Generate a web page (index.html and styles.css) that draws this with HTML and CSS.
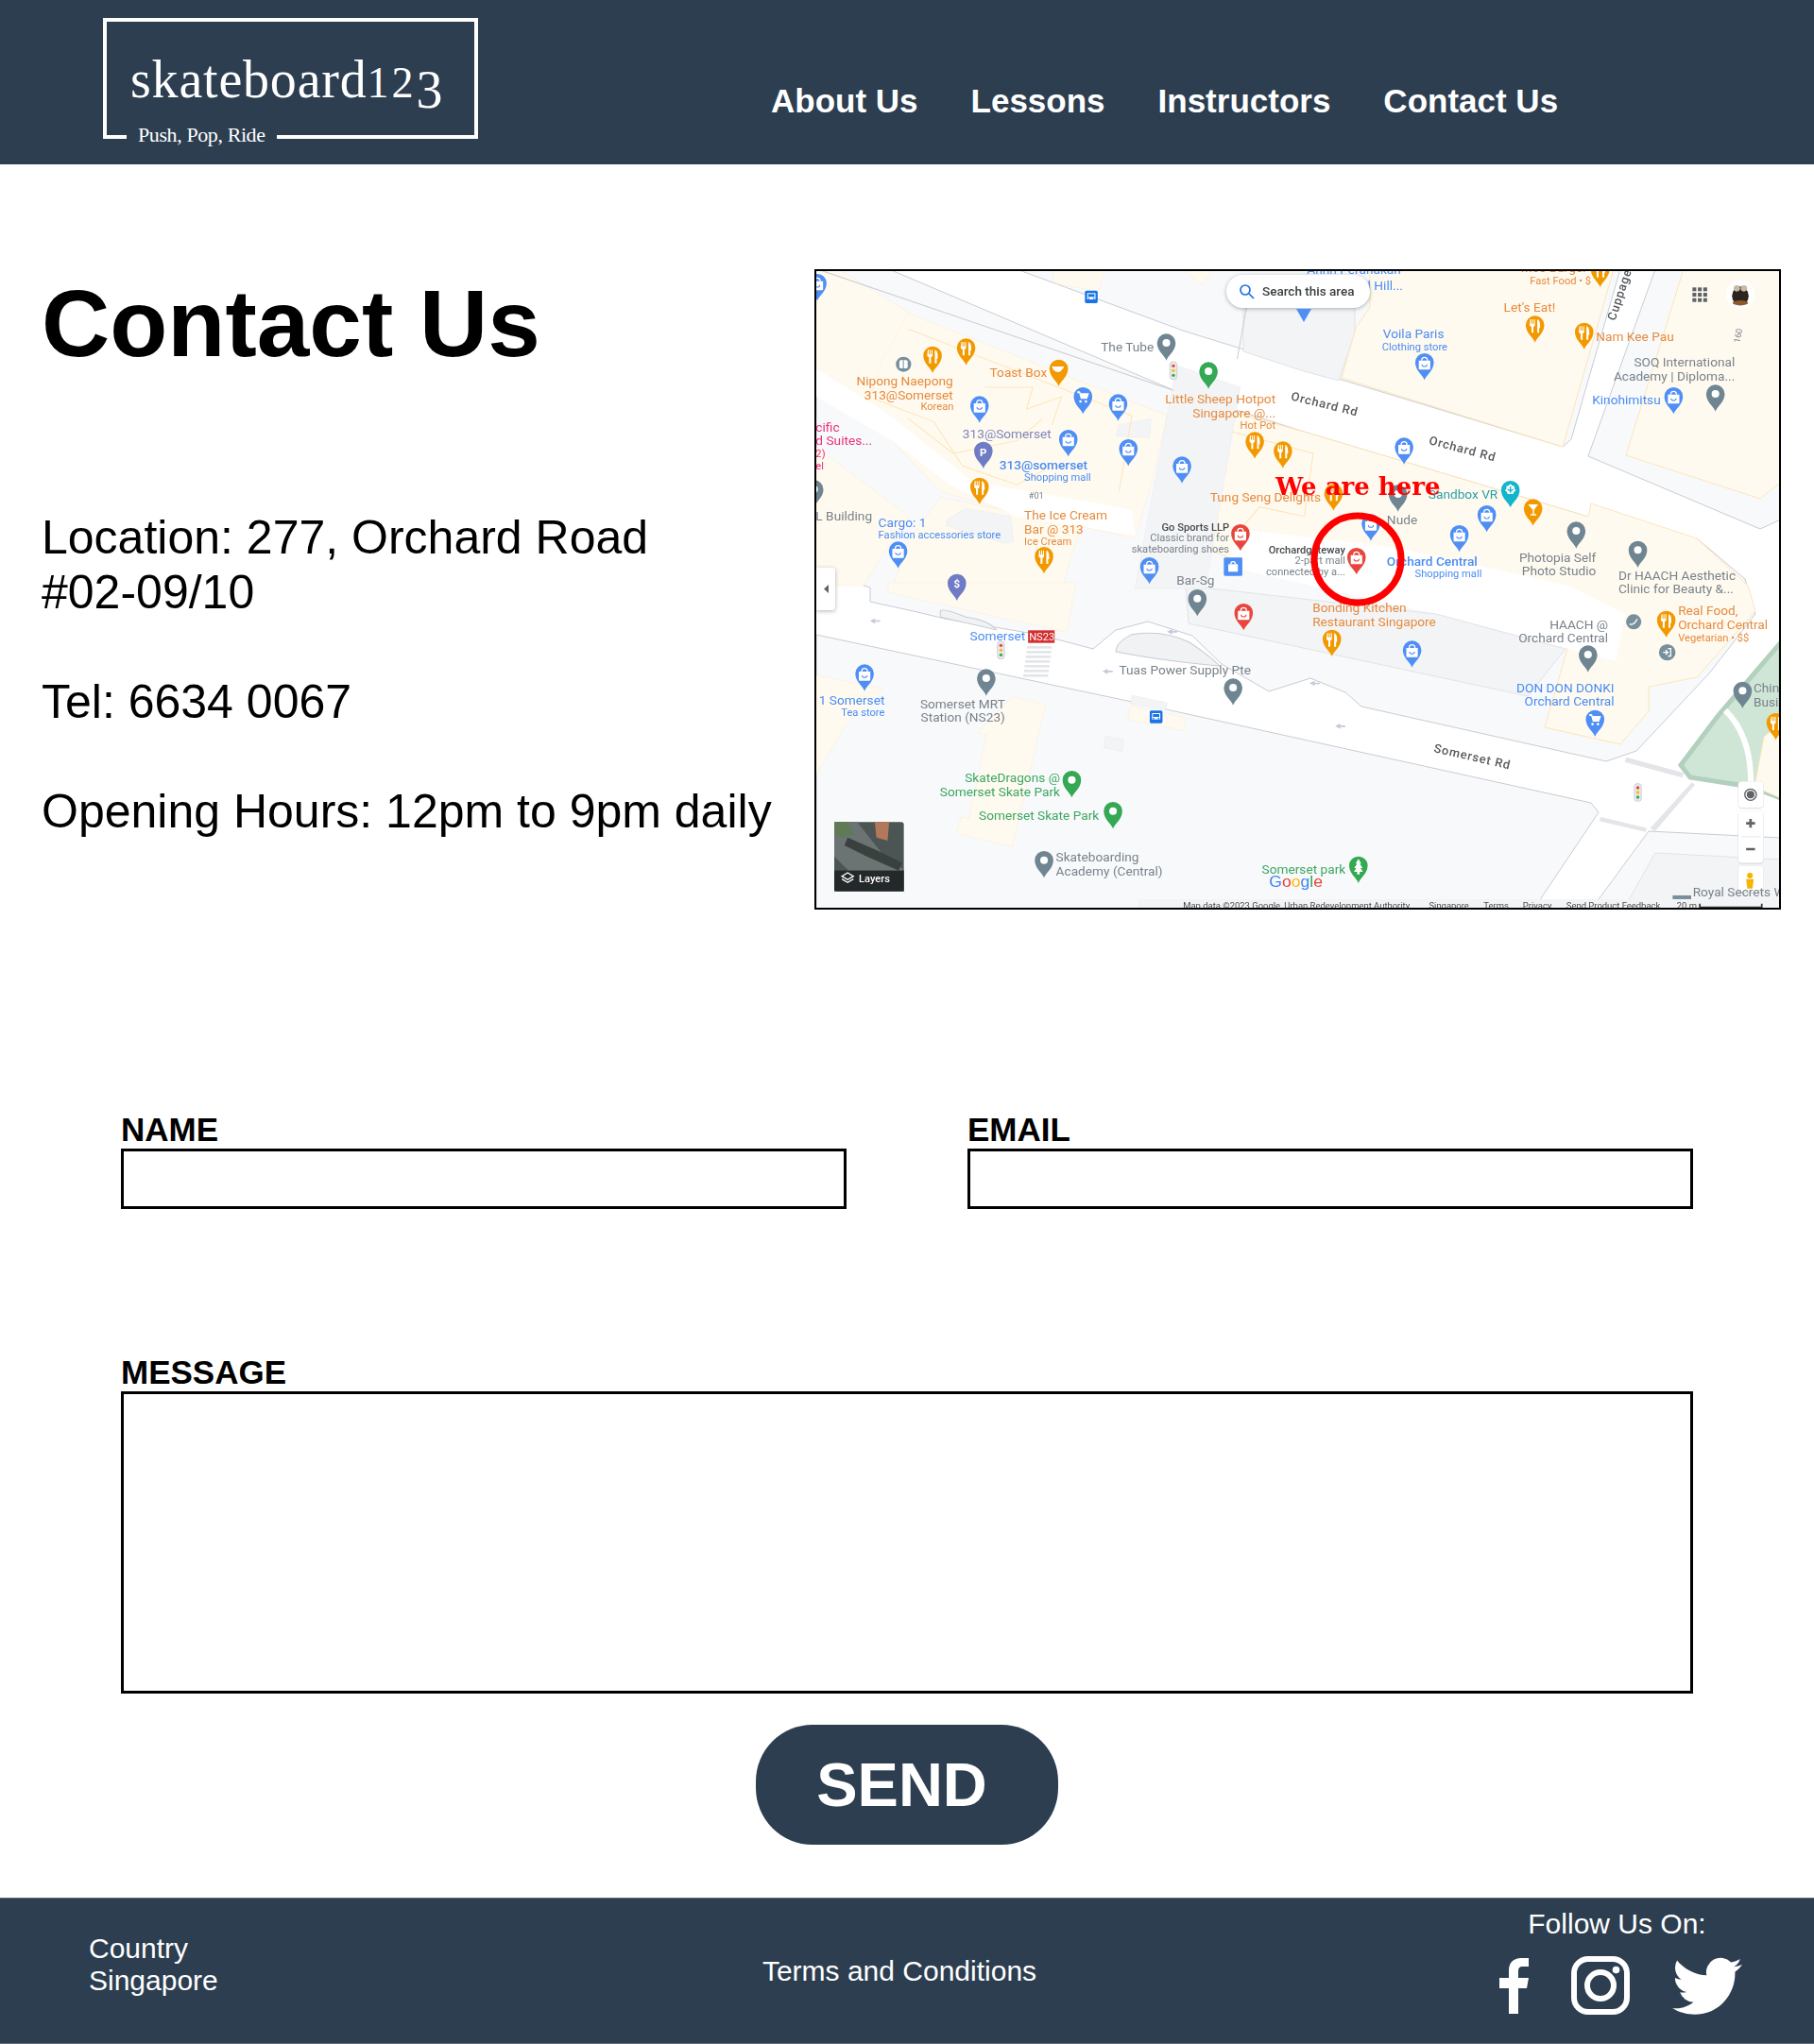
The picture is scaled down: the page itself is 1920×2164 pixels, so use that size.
FILE: index.html
```html
<!DOCTYPE html>
<html lang="en">
<head>
    <meta charset="UTF-8">
    <meta name="viewport" content="width=device-width, initial-scale=1.0">
    <title>Contact Us</title>
    <link rel="stylesheet" href="styles.css">
</head>
<body>
    <header class="site-header">
        <a class="logo" href="#">
            <span class="logo-name">skateboard<span class="logo-one">1</span><span class="logo-two">2</span><span class="logo-three">3</span></span>
            <span class="logo-tag">Push, Pop, Ride</span>
        </a>
        <nav class="main-nav">
            <a href="#">About Us</a>
            <a href="#">Lessons</a>
            <a href="#">Instructors</a>
            <a href="#">Contact Us</a>
        </nav>
    </header>

    <main>
        <section class="contact-top">
            <div class="contact-info">
                <h1>Contact Us</h1>
                <p>Location: 277, Orchard Road<br>#02-09/10<br><br>Tel: 6634 0067<br><br>Opening Hours: 12pm to 9pm daily</p>
            </div>

            <div class="map-box">
                <svg class="map" viewBox="864 287 1019 674" role="img" aria-label="Map of Orchard Road">
                    <defs>
                        <path id="pin" d="M0 0C-6-17-29-30-29-56A29 29 0 1 1 29-56C29-30 6-17 0 0Z"/>
                        <g id="pin-dot"><use href="#pin" class="pin-fill"/><circle cx="0" cy="-56" r="12" class="w"/></g>
                        <g id="pin-food"><use href="#pin" class="pin-fill"/><path class="w" d="M-15-74h3v14h3v-14h3v14h3v-14h3v18q0 5-5 6v19h-6v-19q-6-1-6-6zM7-74q9 2 9 20v8h-3v15h-6z"/></g>
                        <g id="pin-bag"><use href="#pin" class="pin-fill"/><path class="w" d="M-18-62h36v26q0 3-3 3h-30q-3 0-3-3z"/><path class="line-w" d="M-9-62a9 10 0 0 1 18 0"/><path class="line-c" d="M-8-50a8 7 0 0 0 16 0"/></g>
                        <g id="pin-cart"><use href="#pin" class="pin-fill"/><path class="w" d="M-18-72h8l3 6h26l-6 18h-20l-5-18h-6zM-8-44a4 4 0 1 0 .1 0zM9-44a4 4 0 1 0 .1 0z"/></g>
                        <g id="bus"><rect x="-20" y="-20" width="40" height="40" rx="5" class="bus-bg"/><path class="w" d="M-13-12h26v20h-26z"/><rect x="-10" y="-9" width="20" height="9" class="bus-bg"/><circle cx="-8" cy="5" r="2.5" class="bus-bg"/><circle cx="8" cy="5" r="2.5" class="bus-bg"/></g>
                        <g id="light"><rect x="-11" y="-28" width="22" height="56" rx="9" class="light-bg"/><circle cy="-15" r="5" class="l-r"/><circle cy="0" r="5" class="l-y"/><circle cy="15" r="5" class="l-g"/></g>
                    </defs>

                    <!-- ground: page coordinates -->
                    <rect x="864" y="287" width="1019" height="674" class="road"/>
                    <polygon class="pave" points="864,285 941,285 1242,413 1380,457 1681,547 1796,570 1847,613 1858,650 1809,713 1732,795 1700,806 1441,748 1424,733 1387,718 1343,732 1293,703 1262,673 1215,658 1181,667 1157,687 1100,672 1000,655 971,648 921,637 921,622 864,605"/>
                    <polygon class="pave" points="1076,285 1252,350 1420,402 1654,473 1663,465 1715,285"/>
                    <polygon class="pave" points="1681,483 1752,285 1885,285 1885,550 1863,560"/>
                    <polygon class="pave" points="864,672 1198,743 1380,783 1684,850 1692,860 1623,963 864,963"/>
                    <polygon class="pave" points="1684,963 1745,880 1885,887 1885,963"/>
                    <polygon class="bldg" points="1718,963 1752,903 1885,910 1885,963"/>
                    <polygon class="bldg" points="1316,325 1434,325 1434,353 1417,403 1380,393 1316,372"/>
                    <polygon class="cream" points="1420,400 1654,473 1708,285 1450,285 1450,325 1435,347"/>
                    <polygon class="cream" points="1721,482 1782,285 1885,285 1885,510 1863,528"/>
                    <polygon class="cream" points="1245,420 1380,457 1681,547 1684,533 1796,570 1850,620 1858,647 1796,717 1745,727 1745,753 1715,788 1635,770 1659,687 1640,670 1500,640 1300,590 1230,560"/>
                    <polygon class="road-in" points="1310,560 1480,580 1660,620 1720,650 1710,700 1520,650 1300,600"/>
                    <polygon class="bldg" points="1255,620 1520,650 1657,687 1617,737 1258,660"/>
                    <polygon class="park" points="1779,810 1819,757 1885,680 1885,845 1853,833 1789,823"/>
                    <path class="park-path" d="M1826 752Q1855 780 1853 835"/>
                    <polygon class="cream" points="1857,833 1867,780 1885,765 1885,845"/>

                    <!-- west half, north: zoomed grid -->
                    <g transform="translate(860 280) scale(.338 .3333)">
                        <polygon class="cream" points="12,20 90,20 305,155 235,300 240,480 12,330"/>
                        <polygon class="cream" points="300,155 1110,480 1060,700 1010,870 830,830 600,780 400,720 250,560 160,490 220,300"/>
                        <polygon class="cream" points="12,580 300,800 200,950 160,1020 12,1020"/>
                        <polygon class="cream" points="400,740 840,830 780,1030 250,1030 300,880"/>
                        <polygon class="cream" points="750,20 760,60 895,85 915,20"/>
                        <polygon class="cream" points="1165,20 1220,65 1250,20"/>
                        <polygon class="road-in" points="12,330 230,470 500,690 900,760 1000,780 1010,860 640,800 430,700 250,560 12,420"/>
                        <polygon class="bldg" points="1140,320 1340,390 1230,1030 1010,1030"/>
                        <polygon class="bldg" points="420,810 480,775 620,800 630,880 600,885 420,830"/>
                        <polygon class="bldg" points="960,510 1060,490 1055,550 950,545"/>
                        <polyline class="cell" points="300,205 1000,480 960,720"/>
                        <polyline class="cell" points="200,430 380,500 470,640 640,700 730,650"/>
                        <polyline class="cell" points="540,390 690,390 670,460 780,420 750,510"/>
                        <polyline class="cell" points="300,490 440,600 640,560 720,490"/>
                        <polyline class="cell" points="1310,530 1568,600 1540,800 1400,770 1350,830"/>
                        <polyline class="edge" points="30,20 1130,400"/>
                        <polyline class="edge" points="1330,300 1360,130"/>

                        <use href="#pin-bag" class="c-blue" transform="translate(15 115)"/>
                        <use href="#bus" transform="translate(873 103)"/>
                        <use href="#pin-dot" class="c-grey" transform="translate(1108 305)"/>
                        <use href="#light" transform="translate(1130 337)"/>
                        <use href="#pin-dot" class="c-green" transform="translate(1240 395)"/>
                        <use href="#pin-food" class="c-food" transform="translate(376 345)"/>
                        <use href="#pin-food" class="c-food" transform="translate(481 320)"/>
                        <use href="#pin-food" class="c-food" transform="translate(1385 617)"/>
                        <use href="#pin-food" class="c-food" transform="translate(1473 647)"/>
                        <use href="#pin-food" class="c-food" transform="translate(523 762)"/>
                        <use href="#pin-food" class="c-food" transform="translate(725 982)"/>
                        <use href="#pin" class="c-food pin-fill" transform="translate(771 387)"/>
                        <path class="w" d="M749 324h38q-1 8-6 10q-2 7-13 8q-11-1-14-8z"/>
                        <circle cx="285" cy="317" r="24" class="grey-fill"/><rect x="272" y="304" width="26" height="26" rx="5" class="w"/><rect x="283" y="304" width="3" height="26" class="grey-fill"/>
                        <use href="#pin-bag" class="c-blue" transform="translate(523 503)"/>
                        <use href="#pin-bag" class="c-blue" transform="translate(957 497)"/>
                        <use href="#pin-bag" class="c-blue" transform="translate(801 610)"/>
                        <use href="#pin-bag" class="c-blue" transform="translate(989 640)"/>
                        <use href="#pin-bag" class="c-blue" transform="translate(1157 695)"/>
                        <use href="#pin-bag" class="c-blue" transform="translate(268 965)"/>
                        <use href="#pin-bag" class="c-blue" transform="translate(1055 1015)"/>
                        <use href="#pin-cart" class="c-blue" transform="translate(847 475)"/>
                        <use href="#pin" class="c-purple pin-fill" transform="translate(535 648)"/>
                        <text x="535" y="608" class="mt-pin">P</text>
                        <use href="#pin-dot" class="c-grey" transform="translate(5 770)"/>
                        <use href="#pin-bag" class="c-red" transform="translate(1340 910)"/>
                        <rect x="1288" y="931" width="58" height="58" rx="4" class="blue-fill"/>
                        <path class="w" d="M1302 952h30v24h-30z"/><path class="line-w" d="M1310 952a7 8 0 0 1 14 0"/>

                        <text x="903" y="277" class="t mg">The Tube</text>
                        <text x="1450" y="442" class="t mo e">Little Sheep Hotpot</text>
                        <text x="1450" y="487" class="t mo e">Singapore @...</text>
                        <text x="1450" y="522" class="t s mo e">Hot Pot</text>
                        <text x="555" y="358" class="t mo">Toast Box</text>
                        <text x="440" y="385" class="t mo e">Nipong Naepong</text>
                        <text x="440" y="428" class="t mo e">313@Somerset</text>
                        <text x="442" y="462" class="t s mo e">Korean</text>
                        <text x="470" y="552" class="t mv">313@Somerset</text>
                        <text x="585" y="650" class="t mb med">313@somerset</text>
                        <text x="663" y="687" class="t s mb">Shopping mall</text>
                        <text x="677" y="743" class="t xs mg">#01</text>
                        <text x="10" y="530" class="t mp">cific</text>
                        <text x="10" y="573" class="t mp">d Suites...</text>
                        <text x="10" y="612" class="t s mp">2)</text>
                        <text x="10" y="652" class="t s mp">el</text>
                        <text x="10" y="812" class="t mg">L Building</text>
                        <text x="206" y="835" class="t mb">Cargo: 1</text>
                        <text x="206" y="870" class="t s mb">Fashion accessories store</text>
                        <text x="663" y="811" class="t mo">The Ice Cream</text>
                        <text x="663" y="855" class="t mo">Bar @ 313</text>
                        <text x="663" y="892" class="t s mo">Ice Cream</text>
                        <text x="1245" y="753" class="t mo">Tung Seng Delights</text>
                        <text x="1305" y="845" class="t s mk med e">Go Sports LLP</text>
                        <text x="1305" y="880" class="t s mg e">Classic brand for</text>
                        <text x="1305" y="915" class="t s mg e">skateboarding shoes</text>
                        <text x="1140" y="1018" class="t mg">Bar-Sg</text>
                    </g>

                    <!-- east half, north -->
                    <g transform="translate(1380 280) scale(.338 .3333)">
                        <text x="10" y="30" class="t mb">Anhn Peranakan</text>
                        <text x="200" y="80" class="t mb">l Hill...</text>
                        <text x="680" y="25" class="t mo">Mee Burger</text>
                        <text x="708" y="62" class="t s mo">Fast Food • $</text>
                        <use href="#pin-food" class="c-food" transform="translate(928 72)"/>
                        <text x="626" y="150" class="t mo">Let's Eat!</text>
                        <use href="#pin-food" class="c-food" transform="translate(724 248)"/>
                        <use href="#pin-food" class="c-food" transform="translate(878 270)"/>
                        <text x="915" y="243" class="t mo">Nam Kee Pau</text>
                        <text transform="translate(975 180) rotate(-72)" class="t rd">Cuppage</text>
                        <text transform="translate(1365 250) rotate(-80)" class="t xs mg">160</text>
                        <text x="1350" y="323" class="t mg e">SOQ International</text>
                        <text x="1350" y="368" class="t mg e">Academy | Diploma...</text>
                        <text x="903" y="445" class="t mb">Kinohimitsu</text>
                        <use href="#pin-bag" class="c-blue" transform="translate(1158 475)"/>
                        <use href="#pin-dot" class="c-grey" transform="translate(1289 467)"/>
                        <text x="248" y="235" class="t mb">Voila Paris</text>
                        <text x="245" y="273" class="t s mb">Clothing store</text>
                        <use href="#pin-bag" class="c-blue" transform="translate(378 367)"/>
                        <text transform="translate(-42 430) rotate(14)" class="t rd">Orchard Rd</text>
                        <text transform="translate(390 570) rotate(15)" class="t rd">Orchard Rd</text>
                        <use href="#pin-bag" class="c-blue" transform="translate(314 635)"/>
                        <use href="#pin-food" class="c-food" transform="translate(93 782)"/>
                        <use href="#pin-dot" class="c-grey" transform="translate(295 785)"/>
                        <text x="260" y="825" class="t mg">Nude</text>
                        <use href="#pin-bag" class="c-blue" transform="translate(210 878)"/>
                        <use href="#pin-bag" class="c-red" transform="translate(165 985)"/>
                        <use href="#pin-bag" class="c-blue" transform="translate(487 913)"/>
                        <use href="#pin-bag" class="c-blue" transform="translate(573 850)"/>
                        <use href="#pin" class="c-teal pin-fill" transform="translate(647 772)"/>
                        <path class="w" d="M647 697l6 6 7 1-1 7 5 7-6 4-2 7h-18l-2-7-6-4 5-7-1-7 7-1z"/>
                        <path class="line-t" d="M647 705v20M638 714l9 6 9-6"/>
                        <text x="390" y="743" class="t mt">Sandbox VR</text>
                        <use href="#pin" class="c-food pin-fill" transform="translate(718 830)"/>
                        <path class="w" d="M702 762h32l-13 17v14h7v4h-18v-4h7v-14z"/>
                        <text x="130" y="918" class="t s mk med e">Orchardgateway</text>
                        <text x="130" y="952" class="t s mg e">2-part mall</text>
                        <text x="130" y="988" class="t s mg e">connected by a...</text>
                        <text x="260" y="957" class="t mb med">Orchard Central</text>
                        <text x="348" y="993" class="t s mb">Shopping mall</text>
                        <use href="#pin-dot" class="c-grey" transform="translate(853 902)"/>
                        <use href="#pin-dot" class="c-grey" transform="translate(1046 963)"/>
                        <text x="915" y="945" class="t mg e">Photopia Self</text>
                        <text x="915" y="988" class="t mg e">Photo Studio</text>
                        <text x="985" y="1003" class="t mg">Dr HAACH Aesthetic</text>
                        <!-- top right buttons -->
                        <g class="grey-dark">
                            <rect x="1217" y="73" width="12" height="12"/><rect x="1234" y="73" width="12" height="12"/><rect x="1251" y="73" width="12" height="12"/>
                            <rect x="1217" y="90" width="12" height="12"/><rect x="1234" y="90" width="12" height="12"/><rect x="1251" y="90" width="12" height="12"/>
                            <rect x="1217" y="107" width="12" height="12"/><rect x="1234" y="107" width="12" height="12"/><rect x="1251" y="107" width="12" height="12"/>
                        </g>
                        <circle cx="1367" cy="95" r="45" class="w"/>
                        <ellipse cx="1367" cy="100" rx="26" ry="30" class="panda"/>
                        <circle cx="1356" cy="76" r="10" class="panda-face"/><circle cx="1378" cy="76" r="10" class="panda-face"/>
                        <ellipse cx="1367" cy="122" rx="24" ry="8" class="panda-brown"/>
                    </g>

                    <!-- search pill -->
                    <rect x="1298" y="291" width="152" height="35" rx="17.5" class="pill"/>
                    <circle cx="1318" cy="307" r="5" class="line-blue"/><path class="line-blue" d="M1322 311l5 5"/>
                    <text x="1336" y="313" class="pill-text">Search this area</text>
                    <path class="blue-fill" d="M1372 327h16l-8 14z"/>

                    <!-- west half, south -->
                    <g transform="translate(860 620) scale(.338 .3333)">
                        <polygon class="cream" points="235,20 795,148 825,-10 240,-10"/>
                        <polygon class="cream" points="12,285 218,328 100,450 12,600"/>
                        <polygon class="cream" points="625,353 730,378 625,828 452,788 465,735 490,740 545,475 517,468"/>
                        <polygon class="bldg" points="918,478 975,490 970,527 912,515"/>
                        <polygon class="cream" points="995,382 1170,420 1163,460 987,425"/>
                        <polygon class="bldg" points="1000,348 1110,372 1105,395 997,375"/>
                        <path class="island" d="M400 80Q410 70 480 100Q550 110 575 140L400 100Z"/>
                        <path class="island" d="M950 210Q950 180 1000 155Q1100 140 1180 180Q1240 220 1275 255Q1100 240 950 210Z"/>
                        <g class="stripes">
                            <rect x="672" y="192" width="78" height="8"/><rect x="670" y="207" width="78" height="8"/><rect x="668" y="222" width="78" height="8"/><rect x="666" y="237" width="78" height="8"/>
                            <rect x="664" y="252" width="78" height="8"/><rect x="662" y="267" width="78" height="8"/><rect x="660" y="282" width="78" height="8"/>
                        </g>
                        <path class="arrow" d="M180 112l16-8v6h16v5h-16v6z"/>
                        <path class="arrow" d="M1110 146l16-8v6h16v5h-16v6z"/>
                        <path class="arrow" d="M908 272l16-8v6h16v5h-16v6z"/>

                        <use href="#pin" class="c-purple pin-fill" transform="translate(452 48)"/>
                        <text x="452" y="6" class="mt-pin">$</text>
                        <text x="493" y="175" class="t mb">Somerset</text>
                        <rect x="675" y="142" width="83" height="40" class="ns-bg"/>
                        <text x="678" y="174" class="t s ns">NS23</text>
                        <use href="#light" transform="translate(590 205)"/>
                        <use href="#pin-bag" class="c-blue" transform="translate(163 335)"/>
                        <text x="20" y="378" class="t mb">1 Somerset</text>
                        <text x="226" y="413" class="t s mb e">Tea store</text>
                        <use href="#pin-dot" class="c-grey" transform="translate(544 350)"/>
                        <text x="337" y="390" class="t mg">Somerset MRT</text>
                        <text x="339" y="432" class="t mg">Station (NS23)</text>
                        <text x="960" y="282" class="t mg">Tuas Power Supply Pte</text>
                        <use href="#pin-dot" class="c-grey" transform="translate(1317 380)"/>
                        <use href="#bus" transform="translate(1076 417)"/>
                        <use href="#pin-dot" class="c-grey" transform="translate(1205 97)"/>
                        <use href="#pin-bag" class="c-red" transform="translate(1350 142)"/>
                        <text x="775" y="625" class="t mn e">SkateDragons @</text>
                        <text x="775" y="668" class="t mn e">Somerset Skate Park</text>
                        <use href="#pin-dot" class="c-green" transform="translate(812 673)"/>
                        <text x="521" y="743" class="t mn">Somerset Skate Park</text>
                        <use href="#pin-dot" class="c-green" transform="translate(941 772)"/>
                        <use href="#pin-dot" class="c-grey" transform="translate(725 928)"/>
                        <text x="762" y="875" class="t mg">Skateboarding</text>
                        <text x="762" y="920" class="t mg">Academy (Central)</text>
                        <text x="1407" y="915" class="t mn">Somerset park</text>
                        <text x="1430" y="958" class="t google"><tspan class="g-b">G</tspan><tspan class="g-r">o</tspan><tspan class="g-y">o</tspan><tspan class="g-b">g</tspan><tspan class="g-g">l</tspan><tspan class="g-r">e</tspan></text>

                        <!-- layers tile -->
                        <rect x="65" y="748" width="224" height="226" rx="10" class="w"/>
                        <rect x="68" y="751" width="218" height="220" rx="8" class="sat"/>
                        <polygon class="sat-a" points="68,751 140,751 240,880 286,900 286,971 180,971 68,860"/>
                        <polygon class="sat-b" points="110,800 200,840 280,880 270,905 170,860 100,825"/>
                        <polygon class="sat-c" points="195,751 240,751 235,810 200,800"/>
                        <polygon class="sat-d" points="68,751 110,751 130,790 90,800 68,785"/>
                        <rect x="68" y="905" width="218" height="66" class="sat-shade"/>
                        <path class="line-w" d="M110 912l18 11-18 11-18-11zM92 932l18 11 18-11"/>
                        <text x="145" y="943" class="t s lay">Layers</text>
                    </g>

                    <!-- east half, south -->
                    <g transform="translate(1380 620) scale(.338 .3333)">
                        <text x="985" y="25" class="t mg">Clinic for Beauty &amp;...</text>
                        <text x="27" y="83" class="t mo">Bonding Kitchen</text>
                        <text x="27" y="128" class="t mo">Restaurant Singapore</text>
                        <use href="#pin-food" class="c-food" transform="translate(88 225)"/>
                        <use href="#pin-bag" class="c-blue" transform="translate(339 260)"/>
                        <text x="953" y="138" class="t mg e">HAACH @</text>
                        <text x="953" y="180" class="t mg e">Orchard Central</text>
                        <use href="#pin-dot" class="c-grey" transform="translate(890 275)"/>
                        <circle cx="1033" cy="115" r="24" class="grey-fill"/><path class="line-w" d="M1020 122q14 6 24-16"/>
                        <use href="#pin-food" class="c-food" transform="translate(1135 165)"/>
                        <text x="1172" y="92" class="t mo">Real Food,</text>
                        <text x="1172" y="137" class="t mo">Orchard Central</text>
                        <text x="1172" y="177" class="t s mo">Vegetarian • $$</text>
                        <circle cx="1138" cy="212" r="26" class="grey-fill"/><path class="line-w" d="M1125 212h14M1133 205l7 7-7 7M1140 200h9v24h-9"/>
                        <text x="972" y="338" class="t mb e">DON DON DONKI</text>
                        <text x="972" y="380" class="t mb e">Orchard Central</text>
                        <use href="#pin-cart" class="c-blue" transform="translate(912 480)"/>
                        <text transform="translate(405 528) rotate(13)" class="t rd">Somerset Rd</text>
                        <text x="1408" y="340" class="t mg">Chin</text>
                        <text x="1408" y="385" class="t mg">Busi</text>
                        <use href="#pin-dot" class="c-grey" transform="translate(1374 390)"/>
                        <use href="#pin-food" class="c-food" transform="translate(1478 490)"/>
                        <use href="#light" transform="translate(1046 657)"/>
                        <path class="arrow" d="M18 310l16-8v6h16v5h-16v6z"/>
                        <path class="arrow" d="M98 446l16-8v6h16v5h-16v6z"/>
                        <g class="stripes">
                            <polygon points="1010,545 1190,595 1185,610 1005,560"/>
                            <polygon points="930,735 1075,770 1070,782 925,748"/>
                            <polygon points="1085,770 1215,625 1225,632 1100,780"/>
                        </g>
                        <use href="#pin" class="c-green pin-fill" transform="translate(171 945)"/>
                        <path class="w" d="M171 868l9 15h-5l9 14h-6l7 12h-10v8h-8v-8h-10l7-12h-6l9-14h-5z"/>

                        <rect x="1360" y="622" width="80" height="84" rx="12" class="ctrl"/>
                        <circle cx="1399" cy="664" r="12" class="grey-dark"/><circle cx="1399" cy="664" r="18" class="ctrl-ring"/>
                        <rect x="1360" y="715" width="80" height="166" rx="12" class="ctrl"/>
                        <path class="ctrl-sign" d="M1385 751h28v8h-28zM1395 741h8v28h-8zM1385 833h28v8h-28z"/>
                        <rect x="1370" y="796" width="60" height="3" class="ctrl-sep"/>
                        <rect x="1360" y="890" width="80" height="84" rx="12" class="ctrl"/>
                        <circle cx="1397" cy="921" r="9" class="peg"/><path class="peg" d="M1385 932h24l-4 30h-16z"/>

                        <rect x="1155" y="984" width="58" height="13" class="grey-mid"/>
                        <text x="1218" y="988" class="t mg">Royal Secrets W</text>
                        <rect x="-520" y="996" width="2020" height="36" class="bar"/>
                        <text x="-378" y="1025" class="t tiny">Map data ©2023 Google, Urban Redevelopment Authority</text>
                        <text x="392" y="1025" class="t tiny">Singapore</text>
                        <text x="563" y="1025" class="t tiny">Terms</text>
                        <text x="686" y="1025" class="t tiny">Privacy</text>
                        <text x="822" y="1025" class="t tiny">Send Product Feedback</text>
                        <text x="1168" y="1025" class="t tiny">20 m</text>
                        <path class="scale" d="M1240 1010v12h194v-12"/>
                    </g>

                    <!-- back arrow tab -->
                    <path class="ctrl" d="M864 601h17a3 3 0 0 1 3 3v39a3 3 0 0 1-3 3h-17z"/>
                    <path class="grey-dark" d="M877 619v9l-5-4.500z"/>

                    <!-- the marker that was added on top of the map -->
                    <text x="1350" y="524" class="here">We are here</text>
                    <circle cx="1437" cy="592" r="46" class="here-ring"/>
                </svg>
            </div>
        </section>

        <form class="contact-form">
            <div class="form-row">
                <div class="field">
                    <label for="name">NAME</label>
                    <input type="text" id="name">
                </div>
                <div class="field">
                    <label for="email">EMAIL</label>
                    <input type="email" id="email">
                </div>
            </div>
            <div class="field">
                <label for="message">MESSAGE</label>
                <textarea id="message"></textarea>
            </div>
            <button type="button" class="send">SEND</button>
        </form>
    </main>

    <footer class="site-footer">
        <div class="country">Country<br>Singapore</div>
        <a class="terms" href="#">Terms and Conditions</a>
        <div class="follow">
            <span class="follow-title">Follow Us On:</span>
            <div class="socials">
                <svg width="31" height="59" viewBox="1587 2074 31 59"><path class="icon" d="M1607 2133V2106H1616L1618 2095H1607V2088C1607 2085 1608 2083 1612 2083H1618V2074C1616 2074 1613 2074 1610 2074C1602 2074 1597 2079 1597 2087V2095H1587V2106H1597V2133Z"/></svg>
                <svg width="62" height="62" viewBox="0 0 62 62"><rect class="icon-line" x="3" y="3" width="56" height="56" rx="15"/><circle class="icon-line" cx="31" cy="31" r="14"/><circle class="icon" cx="47.500" cy="14.500" r="3.800"/></svg>
                <svg width="74" height="61" viewBox="0 0 24 19.800"><path class="icon" d="M23.953 2.570a10 10 0 01-2.825.775 4.958 4.958 0 002.163-2.723c-.951.555-2.005.959-3.127 1.184a4.920 4.920 0 00-8.384 4.482C7.690 6.095 4.067 4.130 1.640 1.162a4.822 4.822 0 00-.666 2.475c0 1.710.870 3.213 2.188 4.096a4.904 4.904 0 01-2.228-.616v.060a4.923 4.923 0 003.946 4.827 4.996 4.996 0 01-2.212.085 4.936 4.936 0 004.604 3.417 9.867 9.867 0 01-6.102 2.105c-.390 0-.779-.023-1.170-.067a13.995 13.995 0 007.557 2.209c9.053 0 13.998-7.496 13.998-13.985 0-.210 0-.420-.015-.630A9.935 9.935 0 0024 2.590z"/></svg>
            </div>
        </div>
    </footer>
</body>
</html>
```
FILE: styles.css
```css
/* General Page Styling */
body {
    font-family: 'Liberation Sans', Arial, sans-serif;
    margin: 0;
    padding: 0;
    background: #ffffff;
    color: #000000;
}

a {
    color: inherit;
    text-decoration: none;
}

/* Header */
.site-header {
    display: flex;
    align-items: flex-start;
    height: 174px;
    background: #2c3e50;
    color: #ffffff;
}

.logo {
    position: relative;
    box-sizing: border-box;
    display: block;
    width: 397px;
    height: 128px;
    margin: 19px 0 0 109px;
    padding: 29px 0 0 25px;
    border: 4px solid #ffffff;
}

.logo-name {
    font-family: 'Liberation Serif', serif;
    font-size: 56px;
    letter-spacing: 0.8px;
    white-space: nowrap;
}

.logo-one,
.logo-two,
.logo-three {
    font-size: 46px;
    letter-spacing: 3px;
}

.logo-three {
    position: relative;
    top: 11px;
    font-size: 56px;
}

.logo-tag {
    position: absolute;
    left: 21px;
    bottom: -12px;
    padding: 0 12px;
    background: #2c3e50;
    font-family: 'Liberation Serif', serif;
    font-size: 22px;
    letter-spacing: -0.4px;
    line-height: 25px;
    white-space: nowrap;
}

.main-nav {
    display: flex;
    gap: 56px;
    margin: 87px 0 0 310px;
    font-size: 35px;
    font-weight: bold;
}

/* Top section */
.contact-top {
    display: flex;
    justify-content: space-between;
    padding: 111px 35px 0 44px;
}

h1 {
    margin: 0;
    font-size: 100px;
}

.contact-info p {
    margin: 140px 0 0;
    font-size: 50px;
}

.map-box {
    box-sizing: border-box;
    width: 1023px;
    height: 678px;
    border: 2px solid #000000;
}

.map {
    display: block;
    width: 1019px;
    height: 674px;
    filter: blur(0.35px);
}

/* Map ground */
.road, .road-in { fill: #ffffff; }
.pave { fill: #f8f9fb; stroke: #c8ccd1; stroke-width: 1; }
.bldg { fill: #f3f4f6; stroke: #e1e3e7; stroke-width: 1; }
.cream { fill: #fffaf0; stroke: #fde5b8; stroke-width: 1; }
.cell { fill: none; stroke: #fde5b8; stroke-width: 3; }
.edge { fill: none; stroke: #c8ccd1; stroke-width: 3; }
.park { fill: #cfe6d6; stroke: #b3d0bf; stroke-width: 5; }
.park-path { fill: none; stroke: #ffffff; stroke-width: 6; }
.island { fill: #f1f2f4; stroke: #c8ccd1; stroke-width: 3; }
.stripes { fill: #e3e5e8; }
.arrow { fill: #c5c9d8; }

/* Map pins */
.pin-fill { fill: currentColor; }
.c-blue { color: #4f8ff5; }
.c-red { color: #e8453c; }
.c-food { color: #f29900; }
.c-grey { color: #6f8591; }
.c-green { color: #34a853; }
.c-teal { color: #12b5cb; }
.c-purple { color: #6f7bc4; }
.w { fill: #ffffff; }
.line-w { fill: none; stroke: #ffffff; stroke-width: 4; }
.line-c { fill: none; stroke: currentColor; stroke-width: 3; }
.line-t { fill: none; stroke: #12b5cb; stroke-width: 4; }
.grey-fill { fill: #78909c; }
.grey-dark { fill: #5f6368; }
.grey-mid { fill: #78909c; }
.blue-fill { fill: #4f8ff5; }
.bus-bg { fill: #1a73e8; }
.light-bg { fill: #e8eaed; stroke: #bdc1c6; stroke-width: 2; }
.l-r { fill: #ea4335; }
.l-y { fill: #fbbc04; }
.l-g { fill: #34a853; }
.mt-pin { fill: #ffffff; font: bold 34px Roboto, sans-serif; text-anchor: middle; }

/* Map labels */
.t { font-family: Roboto, sans-serif; font-size: 40.5px; }
.t.s { font-size: 33px; }
.t.xs { font-size: 27px; }
.e { text-anchor: end; }
.med { font-weight: 500; }
.mo { fill: #e68a3c; }
.mb { fill: #4a8cf2; }
.mg { fill: #79828a; }
.mv { fill: #7f84b8; }
.mp { fill: #e9307a; }
.mk { fill: #45494d; }
.mt { fill: #2aa0a8; }
.mn { fill: #3da661; }
.t.rd { fill: #55595d; font-size: 38px; font-weight: 500; letter-spacing: 2.5px; }
.ns-bg { fill: #d32f2f; }
.ns { fill: #ffffff; }
.t.google { font-family: 'Liberation Sans', sans-serif; font-size: 52px; }
.g-b { fill: #4285f4; }
.g-r { fill: #ea4335; }
.g-y { fill: #fbbc05; }
.g-g { fill: #34a853; }
.lay { fill: #ffffff; font-weight: 500; }
.t.tiny { fill: #4a4d50; font-size: 28px; }
.bar { fill: #f3f4f5; }
.scale { fill: none; stroke: #333333; stroke-width: 5; }

/* Map controls */
.pill { fill: #ffffff; filter: drop-shadow(0 1px 2px rgba(0, 0, 0, 0.3)); }
.pill-text { fill: #3c4043; font: 500 13.5px Roboto, sans-serif; }
.line-blue { fill: none; stroke: #1a73e8; stroke-width: 1.700; }
.ctrl { fill: #ffffff; filter: drop-shadow(0 1px 2px rgba(0, 0, 0, 0.3)); }
.ctrl-ring { fill: none; stroke: #5f6368; stroke-width: 4; }
.ctrl-sign { fill: #5f6368; }
.ctrl-sep { fill: #e8eaed; }
.peg { fill: #f5b400; }
.panda { fill: #2b2420; }
.panda-face { fill: #c9b9a0; }
.panda-brown { fill: #8a5a2b; }
.sat { fill: #4b5554; }
.sat-a { fill: #6b7472; }
.sat-b { fill: #39413f; }
.sat-c { fill: #b3775c; }
.sat-d { fill: #5f7a55; }
.sat-shade { fill: #23282a; }

/* Marker drawn over the map */
.here {
    fill: #ff0000;
    font-family: 'DejaVu Serif', serif;
    font-size: 26px;
    font-weight: bold;
}

.here-ring {
    fill: none;
    stroke: #ff0000;
    stroke-width: 7;
}

/* Form */
.contact-form {
    padding: 213px 128px 0;
}

.form-row {
    display: flex;
    gap: 128px;
    margin-bottom: 153px;
}

.field {
    flex: 1;
}

.field label {
    display: block;
    font-size: 35px;
    font-weight: bold;
}

.field input,
.field textarea {
    display: block;
    box-sizing: border-box;
    width: 100%;
    margin: 0;
    border: 3px solid #000000;
    border-radius: 0;
    background: #ffffff;
    outline: none;
    resize: none;
}

.field input {
    height: 64px;
}

.field textarea {
    height: 320px;
}

.send {
    display: block;
    width: 320px;
    height: 127px;
    margin: 33px auto 0;
    padding: 0 11px 0 0;
    border: none;
    border-radius: 60px;
    background: #2c3e50;
    color: #ffffff;
    font-family: 'Liberation Sans', Arial, sans-serif;
    font-size: 65px;
    font-weight: bold;
    cursor: pointer;
}

/* Footer */
.site-footer {
    box-sizing: border-box;
    display: grid;
    grid-template-columns: 1fr auto 1fr;
    align-items: center;
    height: 155px;
    margin-top: 56px;
    padding: 0 76px 0 94px;
    border-top: 1px solid #666f78;
    border-bottom: 1px solid #666f78;
    background: #2c3e50;
    color: #ffffff;
    font-size: 30px;
}

.country {
    margin-bottom: 14px;
}

.terms {
    margin-right: 34px;
}

.follow {
    display: flex;
    flex-direction: column;
    align-items: center;
    justify-self: end;
    align-self: start;
    padding-top: 10px;
}

.follow-title {
    margin-right: 8px;
}

.socials {
    display: flex;
    align-items: center;
    gap: 45px;
    margin-top: 17px;
}

.socials svg {
    display: block;
}

.icon { fill: #ffffff; }
.icon-line { fill: none; stroke: #ffffff; stroke-width: 6; }
```
